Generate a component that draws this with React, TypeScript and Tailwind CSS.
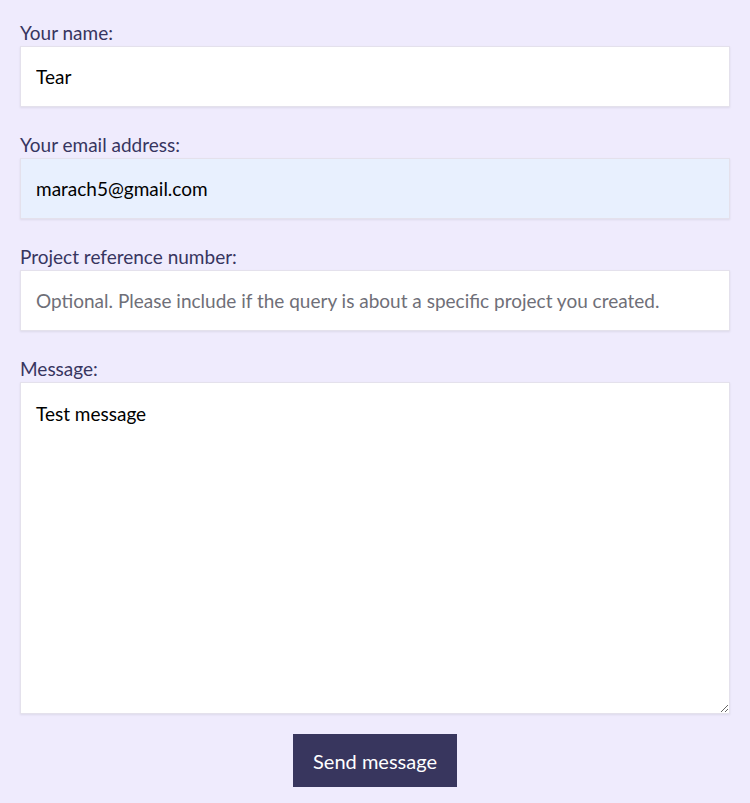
export default function App() {
  const box =
    'w-full h-[61px] bg-white border border-[#e4e1ec] shadow-[0_1px_2px_rgba(0,0,0,0.08)] px-[15px] text-[19px] text-black outline-none placeholder:text-[#6f6f78]'
  const label = 'text-[19px] leading-[27px] text-[#373560]'

  return (
    <div className="min-h-screen bg-[#efebfd] px-5 pt-[19px] pb-4 font-['Lato',sans-serif]">
      <form className="flex flex-col" onSubmit={(e) => e.preventDefault()}>
        <label className={label}>Your name:</label>
        <input className={box} defaultValue="Tear" />

        <label className={'mt-6 ' + label}>Your email address:</label>
        <input className={box + ' !bg-[#e8f0fe]'} defaultValue="marach5@gmail.com" />

        <label className={'mt-6 ' + label}>Project reference number:</label>
        <input
          className={box}
          placeholder="Optional. Please include if the query is about a specific project you created."
        />

        <label className={'mt-6 ' + label}>Message:</label>
        <textarea
          className="w-full h-[332px] bg-white border border-[#e4e1ec] shadow-[0_1px_2px_rgba(0,0,0,0.08)] px-[15px] py-[17px] text-[19px] leading-[27px] text-black outline-none resize-y"
          defaultValue="Test message"
        />

        <div className="flex justify-center mt-5">
          <button
            type="submit"
            className="h-[53px] px-5 bg-[#38365e] text-white text-[20px]"
          >
            Send message
          </button>
        </div>
      </form>
    </div>
  )
}
